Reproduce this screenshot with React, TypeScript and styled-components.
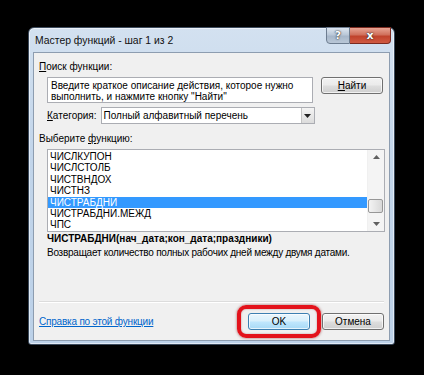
import React from "react";
import styled, { createGlobalStyle } from "styled-components";

const Global = createGlobalStyle`
  html, body {
    margin: 0;
    padding: 0;
    background: #000;
  }
  body {
    font-family: "Liberation Sans", Arial, sans-serif;
    font-size: 10px;
    color: #000;
  }
`;

const Page = styled.div`
  width: 424px;
  height: 375px;
  background: #000;
  padding: 27px 0 0 28px;
  box-sizing: border-box;
  overflow: hidden;
`;

const Window = styled.div`
  width: 367px;
  height: 318px;
  box-sizing: border-box;
  border: 1px solid #3b4a5c;
  border-radius: 6px 6px 3px 3px;
  background: linear-gradient(180deg, #d3e1f0 0%, #c2d5ea 40%, #bcd1e8 100%);
  box-shadow: inset 0 0 0 1px rgba(255, 255, 255, 0.55);
  display: flex;
  flex-direction: column;
  padding: 0 4px 3px 4px;
`;

const TitleBar = styled.div`
  height: 24px;
  display: flex;
  align-items: flex-start;
  justify-content: space-between;
`;

const Title = styled.span`
  font-family: "Liberation Sans", Arial, sans-serif;
  font-size: 10.4px;
  margin: 7px 0 0 2px;
  color: #111;
`;

const Caption = styled.div`
  display: flex;
  margin-right: -1px;
  margin-top: -1px;
`;

const CapButton = styled.div<{ $close?: boolean }>`
  height: 17px;
  width: ${(p) => (p.$close ? "41px" : "24px")};
  box-sizing: border-box;
  display: flex;
  align-items: center;
  justify-content: center;
  color: #fff;
  font-family: "DejaVu Sans", sans-serif;
  font-weight: bold;
  font-size: 11px;
  text-shadow: 0 0 2px #333, 0 0 1px #222;
  border: 1px solid ${(p) => (p.$close ? "#7a2a20" : "#6d7d90")};
  border-left: ${(p) => (p.$close ? "none" : undefined)};
  border-radius: ${(p) => (p.$close ? "0 0 4px 0" : "0 0 0 4px")};
  background: ${(p) =>
    p.$close
      ? "linear-gradient(180deg, #e8a493 0%, #d0705c 45%, #c0432c 55%, #d05a42 100%)"
      : "linear-gradient(180deg, #dde6f0 0%, #bac8d8 45%, #a7b7ca 55%, #b9c7d6 100%)"};
`;

const Client = styled.div`
  flex: 1;
  background: #f0f0f0;
  border: 1px solid #8d9db0;
  display: flex;
  flex-direction: column;
  padding: 0 5px 0 5px;
`;

const Label = styled.div`
  height: 13px;
  line-height: 13px;
`;

const U = styled.span`
  text-decoration: underline;
`;

const SearchRow = styled.div`
  display: flex;
  margin: 4px 0 0 8px;
  align-items: flex-start;
`;

const SearchBox = styled.div`
  width: 266px;
  height: 26px;
  box-sizing: border-box;
  background: #fff;
  border: 1px solid #abadb3;
  padding: 2px 3px;
  line-height: 11px;
  white-space: nowrap;
  overflow: hidden;
`;

const Button = styled.div<{ $default?: boolean }>`
  width: 62px;
  height: 17px;
  box-sizing: border-box;
  border: 1px solid ${(p) => (p.$default ? "#3c7fb1" : "#707070")};
  border-radius: 3px;
  background: ${(p) =>
    p.$default
      ? "linear-gradient(180deg, #eaf6fd 0%, #d9f0fc 45%, #bee6fd 55%, #a7d9f5 100%)"
      : "linear-gradient(180deg, #f2f2f2 0%, #ebebeb 45%, #dddddd 55%, #cfcfcf 100%)"};
  box-shadow: inset 0 0 0 1px rgba(255, 255, 255, 0.7);
  display: flex;
  align-items: center;
  justify-content: center;
  line-height: 1;
`;

const FindButton = styled(Button)`
  margin-left: 8px;
`;

const CategoryRow = styled.div`
  display: flex;
  align-items: center;
  margin: 4px 0 0 8px;
  gap: 4px;
`;

const Select = styled.div`
  width: 214px;
  height: 17px;
  box-sizing: border-box;
  background: #fff;
  border: 1px solid #abadb3;
  display: flex;
  align-items: center;
  justify-content: space-between;
  padding-left: 2px;
`;

const DropBtn = styled.div`
  width: 13px;
  height: 15px;
  box-sizing: border-box;
  border-left: 1px solid #c4c4c4;
  background: linear-gradient(180deg, #f4f4f4 0%, #dcdcdc 100%);
  display: flex;
  align-items: center;
  justify-content: center;
`;

const ListBox = styled.div`
  margin: 4px 0 0 8px;
  width: 338px;
  height: 83px;
  box-sizing: border-box;
  background: #fff;
  border: 1px solid #abadb3;
  display: flex;
`;

const Items = styled.div`
  flex: 1;
  padding-top: 1px;
`;

const Item = styled.div<{ $selected?: boolean }>`
  height: 11.4px;
  line-height: 11.4px;
  padding-left: 2px;
  background: ${(p) => (p.$selected ? "#3399ff" : "transparent")};
  color: ${(p) => (p.$selected ? "#fff" : "#000")};
`;

const ScrollBar = styled.div`
  width: 16px;
  display: flex;
  flex-direction: column;
  align-items: center;
  background: #f4f4f4;
  border-left: 1px solid #f0f0f0;
`;

const Arrow = styled.div`
  height: 14px;
  display: flex;
  align-items: center;
  justify-content: center;
`;

const Track = styled.div`
  flex: 1;
  width: 100%;
  display: flex;
  flex-direction: column;
`;

const Thumb = styled.div`
  margin-top: 35px;
  width: 15px;
  height: 14px;
  box-sizing: border-box;
  border: 1px solid #979797;
  border-radius: 2px;
  background: linear-gradient(90deg, #f3f3f3 0%, #e6e6e6 50%, #d8d8d8 100%);
`;

const Syntax = styled.div`
  margin: 0 0 0 8px;
  font-weight: bold;
  height: 13px;
  line-height: 13px;
`;

const Desc = styled.div`
  margin: 1px 0 0 8px;
  height: 13px;
  line-height: 13px;
  letter-spacing: -0.25px;
`;

const Spacer = styled.div`
  flex: 1;
`;

const Separator = styled.div`
  height: 1px;
  background: #dcdcdc;
  border-bottom: 1px solid #fff;
`;

const Footer = styled.div`
  display: flex;
  align-items: center;
  height: 37px;
`;

const Link = styled.span`
  color: #0066cc;
  text-decoration: underline;
  letter-spacing: -0.2px;
  flex: 1;
`;

const Ring = styled.div`
  border: 4px solid #e3121b;
  border-radius: 9px;
  padding: 4px 7px;
  box-shadow: 0 0 3px rgba(120, 0, 0, 0.6), inset 0 0 2px rgba(120, 0, 0, 0.4);
  margin-right: 1px;
`;

const TriDown = () => (
  <svg width="7" height="4" viewBox="0 0 7 4">
    <path d="M0 0h7L3.5 4z" fill="#222" />
  </svg>
);

const SmallArrow = ({ up }: { up?: boolean }) => (
  <svg width="7" height="4" viewBox="0 0 7 4">
    <path d={up ? "M0 4h7L3.5 0z" : "M0 0h7L3.5 4z"} fill="#606060" />
  </svg>
);

const items = [
  "ЧИСЛКУПОН",
  "ЧИСЛСТОЛБ",
  "ЧИСТВНДОХ",
  "ЧИСТНЗ",
  "ЧИСТРАБДНИ",
  "ЧИСТРАБДНИ.МЕЖД",
  "ЧПС",
];

export default function App() {
  return (
    <Page>
      <Global />
      <Window>
        <TitleBar>
          <Title>Мастер функций - шаг 1 из 2</Title>
          <Caption>
            <CapButton>?</CapButton>
            <CapButton $close>x</CapButton>
          </Caption>
        </TitleBar>
        <Client>
          <Label style={{ marginTop: 7 }}>
            <U>П</U>оиск функции:
          </Label>
          <SearchRow>
            <SearchBox>
              Введите краткое описание действия, которое нужно
              <br />
              выполнить, и нажмите кнопку "Найти"
            </SearchBox>
            <FindButton>
              <U>Н</U>айти
            </FindButton>
          </SearchRow>
          <CategoryRow>
            <span>
              <U>К</U>атегория:
            </span>
            <Select>
              <span>Полный алфавитный перечень</span>
              <DropBtn>
                <TriDown />
              </DropBtn>
            </Select>
          </CategoryRow>
          <Label style={{ marginTop: 8 }}>
            Выберите <U>ф</U>ункцию:
          </Label>
          <ListBox>
            <Items>
              {items.map((it) => (
                <Item key={it} $selected={it === "ЧИСТРАБДНИ"}>
                  {it}
                </Item>
              ))}
            </Items>
            <ScrollBar>
              <Arrow>
                <SmallArrow up />
              </Arrow>
              <Track>
                <Thumb />
              </Track>
              <Arrow>
                <SmallArrow />
              </Arrow>
            </ScrollBar>
          </ListBox>
          <Syntax>ЧИСТРАБДНИ(нач_дата;кон_дата;праздники)</Syntax>
          <Desc>Возвращает количество полных рабочих дней между двумя датами.</Desc>
          <Spacer />
          <Separator />
          <Footer>
            <Link>Справка по этой функции</Link>
            <Ring>
              <Button $default>OK</Button>
            </Ring>
            <Button>Отмена</Button>
          </Footer>
        </Client>
      </Window>
    </Page>
  );
}
